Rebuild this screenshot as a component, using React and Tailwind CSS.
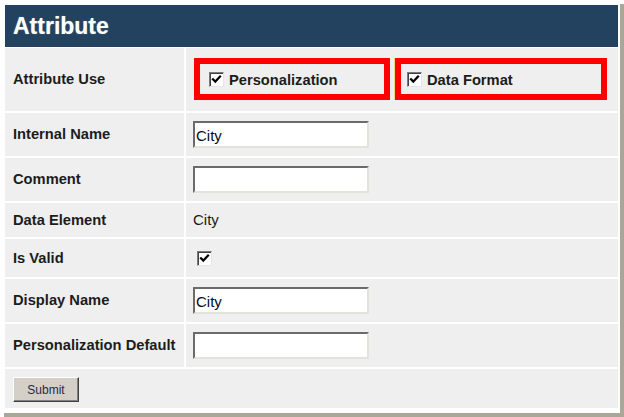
import React from "react";

const font = { fontFamily: '"Liberation Sans", Arial, sans-serif' };

function Check() {
  return (
    <span className="inline-flex w-[15px] h-[15px] shrink-0 items-center justify-center bg-white border border-t-[#7a7a7a] border-l-[#7a7a7a] border-r-[#e6e6e6] border-b-[#e6e6e6] shadow-[inset_1px_1px_0_#404040]">
      <svg width="11" height="11" viewBox="0 0 11 11">
        <path d="M2 5.2 L4.3 7.6 L9 2.6" fill="none" stroke="#000" strokeWidth="2.2" strokeLinecap="square" />
      </svg>
    </span>
  );
}

function Input({ value }) {
  return (
    <div className="w-[176px] h-[27px] bg-white border-2 border-t-[#6b6b6b] border-l-[#6b6b6b] border-r-[#e4e2dc] border-b-[#e4e2dc] flex items-center pl-[1px] pt-[1px] text-[15px] text-[#0a0a1a] leading-none">
      {value}
    </div>
  );
}

function Label({ children }) {
  return (
    <div className="bg-[#efefef] flex items-center pl-[8px] text-[14.7px] font-bold text-[#1c1c1c]">
      {children}
    </div>
  );
}

export default function App() {
  return (
    <div className="w-[624px] h-[417px] bg-white" style={font}>
      <div className="w-[620px] h-[413px] bg-white shadow-[4px_4px_0_#aba798] pt-[5px] pl-[5px] pr-[2px] pb-[5px] flex flex-col">
        <div className="h-[42px] bg-[#23425f] flex items-center pl-[8px] text-[23px] font-bold text-white [text-shadow:0_0_1px_#8aa]">
          Attribute
        </div>
        <div className="mt-[1px] grid grid-cols-[179px_1fr] gap-[2px] grid-rows-[63px_43px_43px_34px_38px_43px_43px_39px]">
          <Label>Attribute Use</Label>
          <div className="bg-[#efefef] flex items-start pt-[10px] pl-[8px] gap-[5px]">
            <div className="w-[196px] h-[42px] border-[6px] border-[#ff0000] flex items-center pl-[9px] gap-[5px] text-[14.7px] font-bold text-[#1c1c1c]">
              <Check />
              <span className="mt-[3px]">Personalization</span>
            </div>
            <div className="w-[212px] h-[42px] border-[6px] border-[#ff0000] flex items-center pl-[6px] gap-[5px] text-[14.7px] font-bold text-[#1c1c1c] shadow-[-1px_0_0_#f3d57a]">
              <Check />
              <span className="mt-[3px]">Data Format</span>
            </div>
          </div>

          <Label>Internal Name</Label>
          <div className="bg-[#efefef] flex items-center pl-[7px]">
            <Input value="City" />
          </div>

          <Label>Comment</Label>
          <div className="bg-[#efefef] flex items-center pl-[7px]">
            <Input value="" />
          </div>

          <Label>Data Element</Label>
          <div className="bg-[#efefef] flex items-center pl-[7px] text-[15px] text-[#1c1c1c]">
            City
          </div>

          <Label>Is Valid</Label>
          <div className="bg-[#efefef] flex items-center pl-[11px]">
            <Check />
          </div>

          <Label>Display Name</Label>
          <div className="bg-[#efefef] flex items-center pl-[7px]">
            <Input value="City" />
          </div>

          <Label>Personalization Default</Label>
          <div className="bg-[#efefef] flex items-center pl-[7px]">
            <Input value="" />
          </div>

          <div className="col-span-2 bg-[#efefef] flex items-start pt-[8px] pl-[8px]">
            <button className="w-[66px] h-[25px] bg-[#d4d0c8] border border-t-white border-l-white border-r-[#404040] border-b-[#404040] shadow-[inset_-1px_-1px_0_#808080] text-[12px] text-[#2a2a3a] leading-none">
              Submit
            </button>
          </div>
        </div>
      </div>
    </div>
  );
}
